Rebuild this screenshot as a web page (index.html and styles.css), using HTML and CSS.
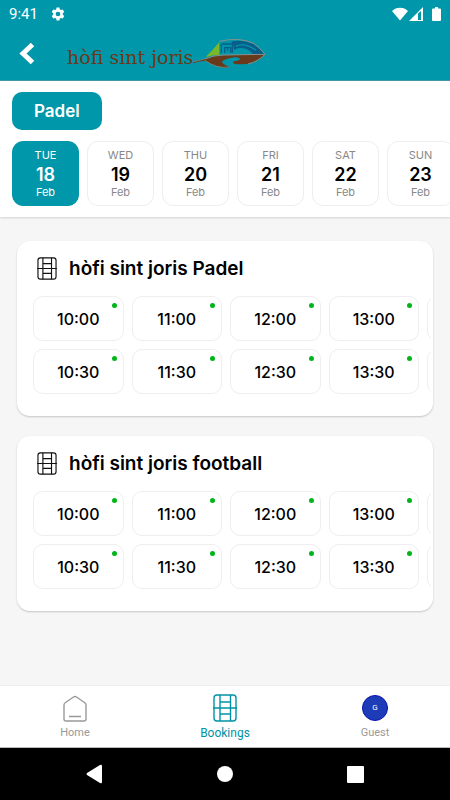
FILE: index.html
```html
<!DOCTYPE html>
<html lang="en">
<head>
    <meta charset="UTF-8">
    <meta name="viewport" content="width=device-width, initial-scale=1.0">
    <title>hòfi sint joris</title>
    <link rel="stylesheet" href="styles.css">
</head>
<body>
    <!-- Shared icons -->
    <svg class="sprite" aria-hidden="true">
        <symbol id="court" viewBox="0 0 24 28">
            <rect x="1" y="1" width="22" height="26" rx="3"/>
            <path d="M7 1v26M17.500 1v26M0 14h24M7 8h10.500M7 20h10.500"/>
        </symbol>
    </svg>

    <!-- Header -->
    <header class="header">
        <div class="status-bar">
            <span class="time">9:41</span>
            <svg class="gear" width="14" height="14" viewBox="0 0 24 24">
                <path fill="#fff" fill-rule="evenodd" d="M9.500 1h5l.6 3.200 2 1.100 3.100-1.100 2.500 4.300-2.500 2.200v2.600l2.500 2.200-2.500 4.300-3.100-1.100-2 1.100-.6 3.200h-5l-.6-3.200-2-1.100-3.100 1.100-2.500-4.300 2.500-2.200v-2.600L1.300 8.500l2.500-4.300 3.100 1.100 2-1.100zM12 8a4 4 0 1 0 0 8 4 4 0 0 0 0-8z"/>
            </svg>
            <span class="signals">
                <svg width="16" height="14" viewBox="0 0 16 14"><path fill="#fff" d="M0 4C4-.5 12-.5 16 4L8 13.500z"/></svg>
                <svg width="14" height="14" viewBox="0 0 14 14"><path fill="#fff" fill-rule="evenodd" d="M0 14L14 0v14zM9 6.500V13h3V4z"/></svg>
                <svg class="battery" width="9" height="14" viewBox="0 0 9 14"><path fill="#fff" d="M3 0h3v1.500h2q1 0 1 1V13q0 1-1 1H1q-1 0-1-1V2.500q0-1 1-1h2z"/></svg>
            </span>
        </div>
        <div class="title-bar">
            <button class="back-btn" aria-label="Back">
                <svg width="16" height="23" viewBox="0 0 16 23"><path fill="none" stroke="#fff" stroke-width="5" d="M13.500 2.500L4 11.500l9.500 9"/></svg>
            </button>
            <a class="logo" href="#">
                <span>hòfi sint joris</span>
                <svg width="73" height="32" viewBox="15 20 219 96">
                    <path fill="#69391b" d="M15 92Q35 86 50 83Q75 73 105 72L230 70Q215 86 195 94Q165 102 138 97Q132 91 140 89Q155 88 156 82Q150 76 130 79Q104 84 102 92Q105 100 125 107Q108 112 85 104Q66 97 52 88Q35 89 15 96z"/>
                    <path fill="#79b829" d="M53 77Q73 58 94 32V70Q72 71 53 77z"/>
                    <path fill="#075e8b" d="M134 30Q165 25 196 38Q215 50 229 68H194Q185 55 165 51Q148 48 138 56z"/>
                    <path fill="none" stroke="#0097aa" stroke-width="4" d="M143 45Q170 32 204 57"/>
                    <path fill="none" stroke="#075e8b" stroke-width="4" d="M100 38v28M110 64V49h18v15M119 49v10M133 30v34M100 38h30"/>
                    <path fill="none" stroke="#87908b" stroke-width="3" d="M94 30Q155 16 197 36Q215 48 231 69M50 83Q75 72 105 71L231 69Q210 91 180 98"/>
                    <path fill="none" stroke="#87908b" stroke-width="2" d="M15 92L50 83M52 88Q86 113 125 107"/>
                </svg>
            </a>
        </div>
    </header>

    <!-- Sport and date filters -->
    <section class="filters">
        <button class="sport-btn">Padel</button>
        <div class="dates">
            <button class="date active"><span>TUE</span><strong>18</strong><span>Feb</span></button>
            <button class="date"><span>WED</span><strong>19</strong><span>Feb</span></button>
            <button class="date"><span>THU</span><strong>20</strong><span>Feb</span></button>
            <button class="date"><span>FRI</span><strong>21</strong><span>Feb</span></button>
            <button class="date"><span>SAT</span><strong>22</strong><span>Feb</span></button>
            <button class="date"><span>SUN</span><strong>23</strong><span>Feb</span></button>
        </div>
    </section>

    <!-- Courts -->
    <main class="courts">
        <section class="court">
            <h2><svg class="court-icon"><use href="#court"/></svg>hòfi sint joris Padel</h2>
            <div class="slots">
                <button class="slot">10:00</button>
                <button class="slot">10:30</button>
                <button class="slot">11:00</button>
                <button class="slot">11:30</button>
                <button class="slot">12:00</button>
                <button class="slot">12:30</button>
                <button class="slot">13:00</button>
                <button class="slot">13:30</button>
                <button class="slot" aria-label="Next time"></button>
                <button class="slot" aria-label="Next time"></button>
            </div>
        </section>
        <section class="court">
            <h2><svg class="court-icon"><use href="#court"/></svg>hòfi sint joris football</h2>
            <div class="slots">
                <button class="slot">10:00</button>
                <button class="slot">10:30</button>
                <button class="slot">11:00</button>
                <button class="slot">11:30</button>
                <button class="slot">12:00</button>
                <button class="slot">12:30</button>
                <button class="slot">13:00</button>
                <button class="slot">13:30</button>
                <button class="slot" aria-label="Next time"></button>
                <button class="slot" aria-label="Next time"></button>
            </div>
        </section>
    </main>

    <!-- Bottom tabs -->
    <nav class="tabs">
        <a class="tab" href="#">
            <svg class="tab-icon" viewBox="0 0 24 28"><path d="M1 11Q1 9.500 2.500 8.500L10.500 3Q12 2 13.500 3L21.500 8.500Q23 9.500 23 11V25Q23 27 21 27H3Q1 27 1 25zM6 22.500h12"/></svg>
            Home
        </a>
        <a class="tab active" href="#">
            <svg class="tab-icon"><use href="#court"/></svg>
            Bookings
        </a>
        <a class="tab" href="#">
            <span class="avatar">G</span>
            Guest
        </a>
    </nav>

    <!-- System buttons -->
    <div class="system-bar">
        <button aria-label="System back"><svg width="18" height="20" viewBox="0 0 18 20"><path fill="#fff" d="M1 9L14 1q2-1 2 1v16q0 2-2 1L1 11q-1-1 0-2z"/></svg></button>
        <button aria-label="System home"><svg width="18" height="18" viewBox="0 0 18 18"><circle cx="9" cy="9" r="8" fill="#fff"/></svg></button>
        <button aria-label="Recent apps"><svg width="18" height="18" viewBox="0 0 18 18"><rect x="0" y="1" width="17" height="17" rx="1" fill="#fff"/></svg></button>
    </div>
</body>
</html>
```
FILE: styles.css
```css
* {
    box-sizing: border-box;
}

body {
    display: flex;
    flex-direction: column;
    min-height: 100vh;
    margin: 0;
    overflow-x: hidden;
    font-family: Inter, "Open Sans", sans-serif;
    background-color: #f6f6f6;
    color: #000;
}

button {
    padding: 0;
    border: none;
    background: none;
    font-family: inherit;
    color: inherit;
    cursor: pointer;
}

a {
    color: inherit;
    text-decoration: none;
}

svg {
    display: block;
}

.sprite {
    display: none;
}

/* Header */
.header {
    background-color: #0097aa;
    border-bottom: 1px solid #4498a8;
}

.status-bar {
    display: flex;
    align-items: center;
    height: 27px;
    padding: 0 9px;
    font-family: Roboto, sans-serif;
    font-size: 15px;
    color: #fff;
}

.gear {
    margin-left: 13px;
}

.signals {
    display: flex;
    gap: 1px;
    margin-left: auto;
}

.battery {
    margin-left: 8px;
}

.title-bar {
    display: flex;
    align-items: center;
    height: 53px;
    padding: 0 19px;
}

.logo {
    display: flex;
    align-items: center;
    margin-left: 32px;
    font-family: "DejaVu Serif", serif;
    font-size: 19px;
    line-height: 24px;
    color: #69391b;
}

.logo span {
    padding-top: 6px;
}

/* Filters */
.filters {
    padding: 11px 0 11px 12px;
    background-color: #fff;
    box-shadow: 0 1px 2px rgba(0, 0, 0, 0.15);
}

.sport-btn {
    height: 38px;
    padding: 0 22px;
    border-radius: 10px;
    background-color: #0097aa;
    font-size: 17px;
    font-weight: 600;
    color: #fff;
}

.dates {
    display: flex;
    gap: 8px;
    margin-top: 11px;
    overflow: hidden;
}

.date {
    display: flex;
    flex: 0 0 67px;
    flex-direction: column;
    align-items: center;
    justify-content: center;
    height: 65px;
    border: 1px solid #eee;
    border-radius: 11px;
    font-size: 11px;
    line-height: 14px;
    color: #888;
}

.date strong {
    margin: 4px 0 1px;
    font-size: 18px;
    font-weight: 600;
    line-height: 18px;
    color: #000;
}

.date.active {
    border-color: #0097aa;
    background-color: #0097aa;
    color: #fff;
}

.date.active strong {
    color: #fff;
}

/* Courts */
.courts {
    flex: 1;
    padding: 24px 17px;
}

.court {
    padding: 13px 0 22px 16px;
    border-radius: 13px;
    background-color: #fff;
    box-shadow: 0 1px 2px rgba(0, 0, 0, 0.2);
}

.court + .court {
    margin-top: 20px;
}

.court h2 {
    display: flex;
    align-items: center;
    gap: 12px;
    height: 28px;
    margin: 0 0 14px;
    padding-left: 4px;
    font-size: 19px;
    font-weight: 600;
}

.court-icon {
    width: 20px;
    height: 23px;
    fill: none;
    stroke: #111;
    stroke-width: 1.4px;
}

.slots {
    display: grid;
    grid-template-rows: 45px 45px;
    grid-auto-columns: calc((100% - 36px) / 4);
    grid-auto-flow: column;
    gap: 8px;
    margin-right: 2px;
    overflow: hidden;
}

.slot {
    position: relative;
    border: 1px solid #eee;
    border-radius: 10px;
    font-size: 16px;
    font-weight: 500;
}

/* Availability dot */
.slot::after {
    content: "";
    position: absolute;
    top: 6px;
    right: 6px;
    width: 5px;
    height: 5px;
    border-radius: 50%;
    background-color: #00b51a;
}

/* Tabs */
.tabs {
    display: flex;
    height: 63px;
    border-top: 1px solid #eee;
    border-bottom: 1px solid #bbb;
    background-color: #fff;
    font-family: Roboto, sans-serif;
    font-size: 11px;
    color: #999;
}

.tab {
    display: flex;
    flex: 1;
    flex-direction: column;
    align-items: center;
    justify-content: center;
    gap: 4px;
    line-height: 14px;
}

.tab.active {
    font-size: 12px;
    color: #0093a5;
}

.tab-icon {
    width: 24px;
    height: 28px;
    fill: none;
    stroke: currentColor;
    stroke-width: 1.4px;
}

.avatar {
    display: flex;
    align-items: center;
    justify-content: center;
    width: 26px;
    height: 26px;
    margin: 1px 0;
    border: 1px solid #0b14a8;
    border-radius: 50%;
    background-color: #1e3bb8;
    font-size: 8px;
    color: #fff;
}

/* System bar */
.system-bar {
    display: flex;
    align-items: center;
    justify-content: space-between;
    height: 52px;
    padding: 0 19%;
    background-color: #000;
}
```
